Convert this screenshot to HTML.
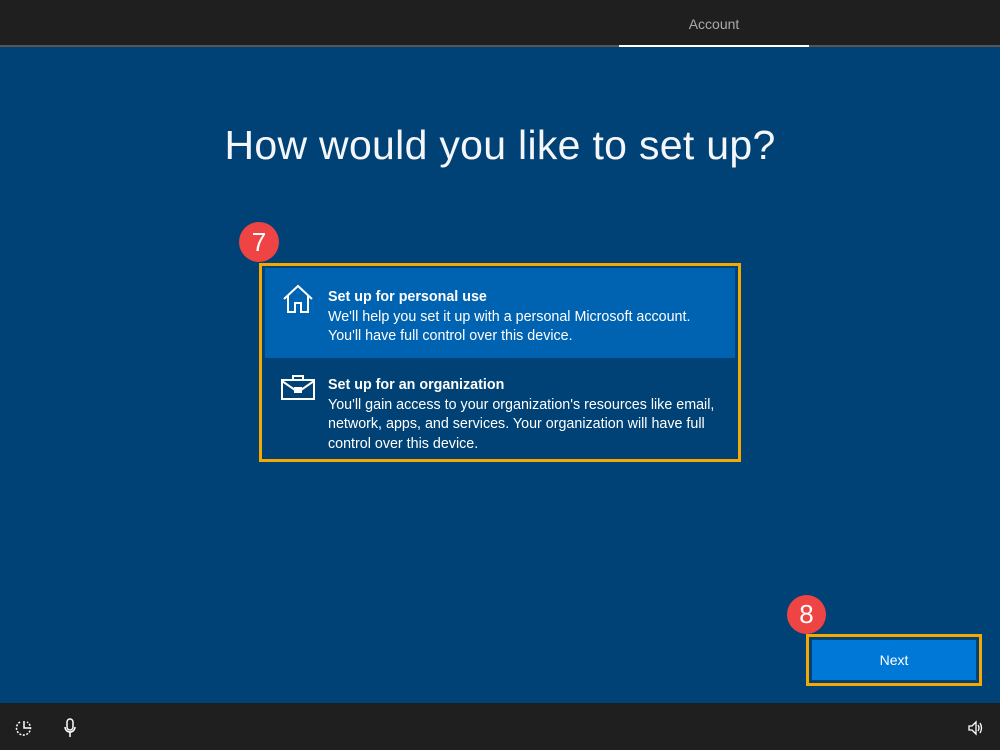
<!DOCTYPE html>
<html><head><meta charset="utf-8"><style>
body{margin:0;width:1000px;height:750px;background:#004275;font-family:"Liberation Sans",sans-serif;position:relative;overflow:hidden;color:#fff}
.top{position:absolute;left:0;top:0;width:1000px;height:45px;background:#1f1f1f;border-bottom:2px solid #555}
.tab{position:absolute;left:619px;top:0;width:190px;height:45px;border-bottom:2px solid #fff;text-align:center;line-height:48px;font-size:14px;color:#aaa}
h1{position:absolute;left:0;width:1000px;top:122px;margin:0;text-align:center;font-weight:normal;font-size:41px;letter-spacing:0.3px;color:#f4f6f9}
.box{position:absolute;left:259px;top:263px;width:476px;height:193px;border:3px solid #f5a800;background:#004275}
.item{position:absolute;left:3px;width:470px;font-size:14.3px;line-height:19.5px}
.i1{top:2px;height:90px;background:#0063b1}
.i2{top:92px;height:98px}
.txt{position:absolute;left:63px;top:20px;white-space:nowrap}
.i2 .txt{top:18px}
b{font-weight:bold}
.badge{position:absolute;border-radius:50%;background:#ef4444;color:#fff;text-align:center;font-size:26px}
.next{position:absolute;left:806px;top:634px;width:170px;height:46px;border:3px solid #f5a800;}
.next div{position:absolute;left:3px;top:3px;right:3px;bottom:3px;background:#0078d7;text-align:center;line-height:40px;font-size:14px}
.bot{position:absolute;left:0;top:703px;width:1000px;height:47px;background:#1f1f1f}
</style></head><body>
<div class="top"><div class="tab">Account</div></div>
<h1>How would you like to set up?</h1>
<div class="badge" style="left:239px;top:222px;width:40px;height:40px;line-height:40px">7</div>
<div class="box">
 <div class="item i1">
  <svg style="position:absolute;left:17px;top:16px" width="32" height="30" viewBox="0 0 32 30" fill="none" stroke="#fff" stroke-width="2"><path d="M2 15 L16 2 L30 15 M6 11 V28 H13 V19 H19 V28 H26 V11"/></svg>
  <div class="txt"><b>Set up for personal use</b><br>We'll help you set it up with a personal Microsoft account.<br>You'll have full control over this device.</div>
 </div>
 <div class="item i2">
  <svg style="position:absolute;left:16px;top:16px" width="34" height="26" viewBox="0 0 34 26" fill="none" stroke="#fff" stroke-width="2"><rect x="1" y="6" width="32" height="19"/><path d="M12 6 V2 H22 V6 M1 7 L14 16 H20 L33 7"/><rect x="14" y="14" width="6" height="4"/></svg>
  <div class="txt"><b>Set up for an organization</b><br>You'll gain access to your organization's resources like email,<br>network, apps, and services. Your organization will have full<br>control over this device.</div>
 </div>
</div>
<div class="badge" style="left:787px;top:595px;width:39px;height:39px;line-height:39px">8</div>
<div class="next"><div>Next</div></div>
<div class="bot">
 <svg style="position:absolute;left:15px;top:16px" width="18" height="18" viewBox="0 0 18 18" fill="none" stroke="#fff" stroke-width="1.5"><path d="M5 3 A7 7 0 1 0 12 3" stroke-dasharray="2 1.5"/><path d="M9 2 V9 H15"/></svg>
 <svg style="position:absolute;left:63px;top:15px" width="14" height="20" viewBox="0 0 14 20" fill="none" stroke="#fff" stroke-width="1.5"><rect x="4" y="1" width="6" height="11" rx="3"/><path d="M2 9 A5 5 0 0 0 12 9 M7 14 V19"/></svg>
 <svg style="position:absolute;left:967px;top:17px" width="16" height="16" viewBox="0 0 16 16" fill="none" stroke="#fff" stroke-width="1.3"><path d="M2 6 H5 L9 2 V14 L5 10 H2 Z M11 5 Q13 8 11 11 M13 3 Q16 8 13 13"/></svg>
</div>
</body></html>
